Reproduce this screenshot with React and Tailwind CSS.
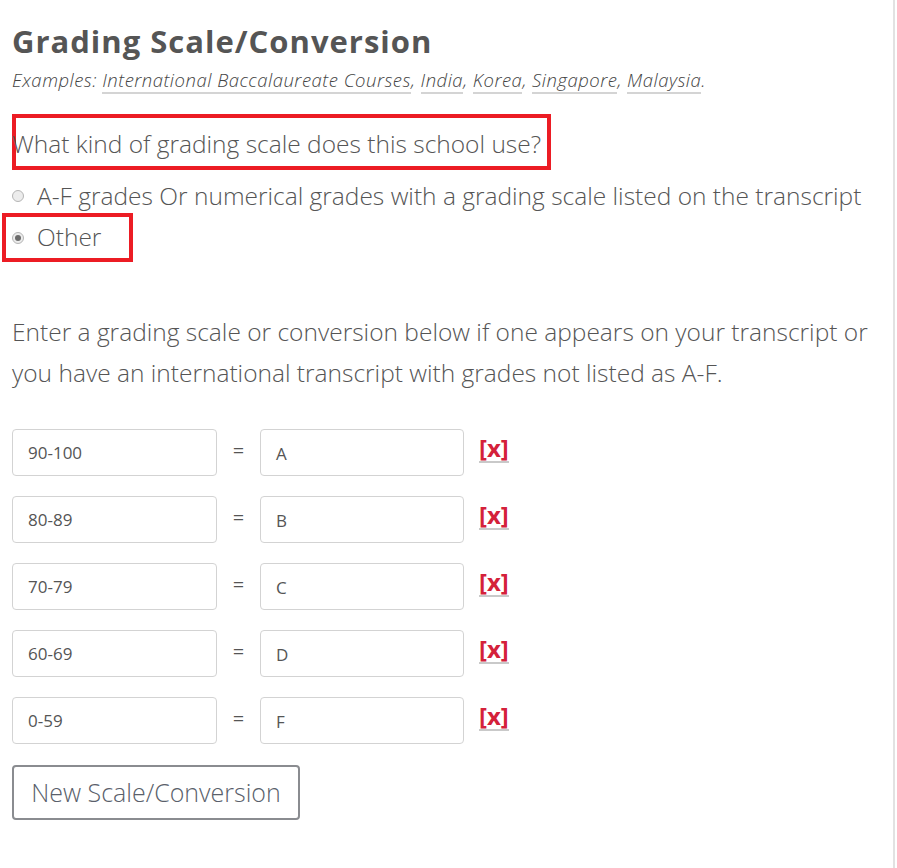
const links = ["International Baccalaureate Courses", "India", "Korea", "Singapore", "Malaysia"];

const rows = [
  { range: "90-100", grade: "A" },
  { range: "80-89", grade: "B" },
  { range: "70-79", grade: "C" },
  { range: "60-69", grade: "D" },
  { range: "0-59", grade: "F" },
];

function Radio({ checked }) {
  return (
    <span className="inline-flex items-center justify-center w-[12px] h-[12px] rounded-full border border-[#b5b5b5] bg-[#ececec] shrink-0">
      {checked && <span className="w-[6px] h-[6px] rounded-full bg-[#6b6b6b]" />}
    </span>
  );
}

export default function App() {
  return (
    <div
      className="w-[897px] h-[868px] bg-white overflow-hidden flex text-[#555]"
      style={{ fontFamily: "'Open Sans', 'Liberation Sans', sans-serif" }}
    >
      <div className="w-[895px] border-r-2 border-[#e2e2e2] pl-[12px] pt-[23px]">
        {/* header */}
        <h2 className="text-[31px] font-bold leading-[36px] text-[#555] tracking-[1px]">
          Grading Scale/Conversion
        </h2>
        <p className="mt-[10px] text-[18.5px] italic font-light leading-[22px] text-[#444] tracking-[0.5px]">
          Examples:{" "}
          {links.map((l, i) => (
            <span key={l}>
              <span className="border-b-2 border-[#d4d4d4]">{l}</span>
              {i < links.length - 1 ? ", " : "."}
            </span>
          ))}
        </p>

        {/* question */}
        <div className="mt-[23px] w-[539px] h-[56px] border-[4px] border-[#ec1c24] flex items-center">
          <span className="text-[24.5px] font-light leading-[30px] -ml-[4px] pt-[4px] whitespace-nowrap">
            What kind of grading scale does this school use?
          </span>
        </div>

        <div className="mt-[10px] h-[32px] flex items-center gap-[13px] text-[24.5px] font-light leading-[32px] whitespace-nowrap">
          <Radio />
          <span>A-F grades Or numerical grades with a grading scale listed on the transcript</span>
        </div>
        <div className="-ml-[10px] mt-[1px] w-[131px] h-[49px] border-[4px] border-[#ec1c24] flex items-center pl-[6px] gap-[13px]">
          <Radio checked />
          <span className="text-[24.5px] font-light leading-[34px] -mt-[2px]">Other</span>
        </div>

        {/* explanation */}
        <p className="mt-[49px] w-[860px] text-[24.5px] font-light leading-[41px]">
          Enter a grading scale or conversion below if one appears on your transcript or you have an
          international transcript with grades not listed as A-F.
        </p>

        {/* rows */}
        <div className="mt-[36px] flex flex-col gap-[20px]">
          {rows.map((r) => (
            <div key={r.range} className="flex items-center">
              <div className="w-[205px] h-[47px] border border-[#d3d3d3] rounded-[4px] flex items-center pl-[15px] text-[17px] text-[#555]">
                {r.range}
              </div>
              <span className="w-[43px] text-center text-[20px] -mt-[3px] text-[#555]">=</span>
              <div className="w-[204px] h-[47px] border border-[#d3d3d3] rounded-[4px] flex items-center pl-[15px] pt-[2px] text-[17px] text-[#555]">
                {r.grade}
              </div>
              <span className="ml-[15px] -mt-[8px] text-[24px] font-bold leading-[27px] text-[#d4213a] border-b-2 border-[#c9c9c9]">
                [x]
              </span>
            </div>
          ))}
        </div>

        <button className="mt-[21px] w-[288px] h-[55px] border-2 border-[#8a8c90] rounded-[4px] text-[25px] font-light text-[#5a5f6b] bg-white">
          New Scale/Conversion
        </button>
      </div>
    </div>
  );
}
